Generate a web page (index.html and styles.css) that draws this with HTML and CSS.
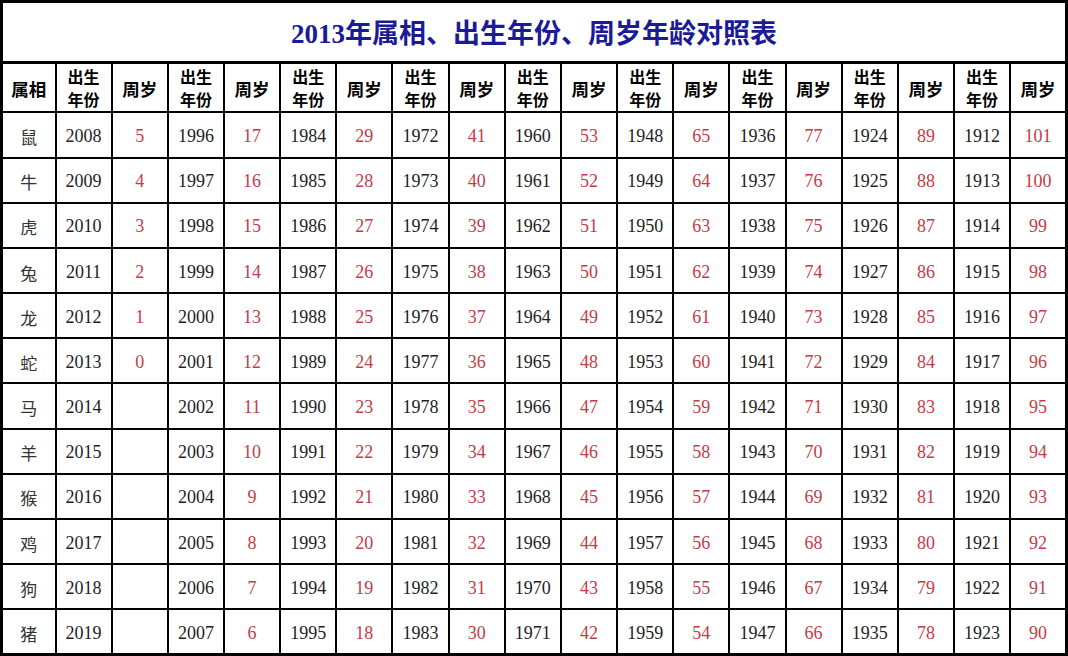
FILE: index.html
```html
<!DOCTYPE html>
<html lang="zh-CN">
<head>
<meta charset="utf-8">
<title>2013年属相、出生年份、周岁年龄对照表</title>
<link rel="stylesheet" href="styles.css">
</head>
<body>
<table class="chart">
<colgroup><col class="c-animal"><col span="18"></colgroup>
<tr class="title-row"><td colspan="19" class="title">2013年属相、出生年份、周岁年龄对照表</td></tr>
<tr class="head-row"><th>属相</th><th><span class="ln">出生</span><span class="ln">年份</span></th><th>周岁</th><th><span class="ln">出生</span><span class="ln">年份</span></th><th>周岁</th><th><span class="ln">出生</span><span class="ln">年份</span></th><th>周岁</th><th><span class="ln">出生</span><span class="ln">年份</span></th><th>周岁</th><th><span class="ln">出生</span><span class="ln">年份</span></th><th>周岁</th><th><span class="ln">出生</span><span class="ln">年份</span></th><th>周岁</th><th><span class="ln">出生</span><span class="ln">年份</span></th><th>周岁</th><th><span class="ln">出生</span><span class="ln">年份</span></th><th>周岁</th><th><span class="ln">出生</span><span class="ln">年份</span></th><th>周岁</th></tr>
<tr><td>鼠</td><td>2008</td><td>5</td><td>1996</td><td>17</td><td>1984</td><td>29</td><td>1972</td><td>41</td><td>1960</td><td>53</td><td>1948</td><td>65</td><td>1936</td><td>77</td><td>1924</td><td>89</td><td>1912</td><td>101</td></tr>
<tr><td>牛</td><td>2009</td><td>4</td><td>1997</td><td>16</td><td>1985</td><td>28</td><td>1973</td><td>40</td><td>1961</td><td>52</td><td>1949</td><td>64</td><td>1937</td><td>76</td><td>1925</td><td>88</td><td>1913</td><td>100</td></tr>
<tr><td>虎</td><td>2010</td><td>3</td><td>1998</td><td>15</td><td>1986</td><td>27</td><td>1974</td><td>39</td><td>1962</td><td>51</td><td>1950</td><td>63</td><td>1938</td><td>75</td><td>1926</td><td>87</td><td>1914</td><td>99</td></tr>
<tr><td>兔</td><td>2011</td><td>2</td><td>1999</td><td>14</td><td>1987</td><td>26</td><td>1975</td><td>38</td><td>1963</td><td>50</td><td>1951</td><td>62</td><td>1939</td><td>74</td><td>1927</td><td>86</td><td>1915</td><td>98</td></tr>
<tr><td>龙</td><td>2012</td><td>1</td><td>2000</td><td>13</td><td>1988</td><td>25</td><td>1976</td><td>37</td><td>1964</td><td>49</td><td>1952</td><td>61</td><td>1940</td><td>73</td><td>1928</td><td>85</td><td>1916</td><td>97</td></tr>
<tr><td>蛇</td><td>2013</td><td>0</td><td>2001</td><td>12</td><td>1989</td><td>24</td><td>1977</td><td>36</td><td>1965</td><td>48</td><td>1953</td><td>60</td><td>1941</td><td>72</td><td>1929</td><td>84</td><td>1917</td><td>96</td></tr>
<tr><td>马</td><td>2014</td><td></td><td>2002</td><td>11</td><td>1990</td><td>23</td><td>1978</td><td>35</td><td>1966</td><td>47</td><td>1954</td><td>59</td><td>1942</td><td>71</td><td>1930</td><td>83</td><td>1918</td><td>95</td></tr>
<tr><td>羊</td><td>2015</td><td></td><td>2003</td><td>10</td><td>1991</td><td>22</td><td>1979</td><td>34</td><td>1967</td><td>46</td><td>1955</td><td>58</td><td>1943</td><td>70</td><td>1931</td><td>82</td><td>1919</td><td>94</td></tr>
<tr><td>猴</td><td>2016</td><td></td><td>2004</td><td>9</td><td>1992</td><td>21</td><td>1980</td><td>33</td><td>1968</td><td>45</td><td>1956</td><td>57</td><td>1944</td><td>69</td><td>1932</td><td>81</td><td>1920</td><td>93</td></tr>
<tr><td>鸡</td><td>2017</td><td></td><td>2005</td><td>8</td><td>1993</td><td>20</td><td>1981</td><td>32</td><td>1969</td><td>44</td><td>1957</td><td>56</td><td>1945</td><td>68</td><td>1933</td><td>80</td><td>1921</td><td>92</td></tr>
<tr><td>狗</td><td>2018</td><td></td><td>2006</td><td>7</td><td>1994</td><td>19</td><td>1982</td><td>31</td><td>1970</td><td>43</td><td>1958</td><td>55</td><td>1946</td><td>67</td><td>1934</td><td>79</td><td>1922</td><td>91</td></tr>
<tr><td>猪</td><td>2019</td><td></td><td>2007</td><td>6</td><td>1995</td><td>18</td><td>1983</td><td>30</td><td>1971</td><td>42</td><td>1959</td><td>54</td><td>1947</td><td>66</td><td>1935</td><td>78</td><td>1923</td><td>90</td></tr>
</table>
</body>
</html>
```

FILE: styles.css
```css
html, body {
  margin: 0;
  padding: 0;
  background: #fff;
}

.chart {
  width: 1068px;
  height: 656px;
  border-collapse: collapse;
  table-layout: fixed;
  border: 3px solid #000;
  font-family: "Liberation Serif", "Noto Sans CJK SC", serif;
}

.c-animal {
  width: 54px;
}

.chart td,
.chart th {
  border: 2px solid #000;
  padding: 0;
  text-align: center;
  vertical-align: middle;
}

.title-row {
  height: 61px;
}

.chart .title {
  border-bottom-width: 3px;
  font-size: 27px;
  font-weight: bold;
  color: #1b1b96;
  padding-bottom: 2px;
}

.head-row {
  height: 48px;
}

.head-row th {
  font-family: "Noto Sans CJK SC", sans-serif;
  font-size: 17.5px;
  font-weight: bold;
  line-height: 23px;
  color: #000;
  padding-top: 1px;
}

.head-row .ln {
  display: block;
  height: 23px;
  font-size: 16px;
  line-height: 23px;
}

.chart tr:not(.title-row):not(.head-row) {
  height: 45px;
}

.chart td {
  font-size: 18px;
  color: #1e1e1e;
  padding-top: 3px;
}

.chart td:nth-child(odd) {
  color: #c53b47;
}

.chart td:first-child {
  font-family: "Noto Sans CJK SC", sans-serif;
  font-size: 17px;
  color: #333;
}

.chart .title:first-child {
  font-family: "Liberation Serif", "Noto Sans CJK SC", serif;
  font-size: 27px;
  color: #1b1b96;
  padding-top: 0;
}
```
